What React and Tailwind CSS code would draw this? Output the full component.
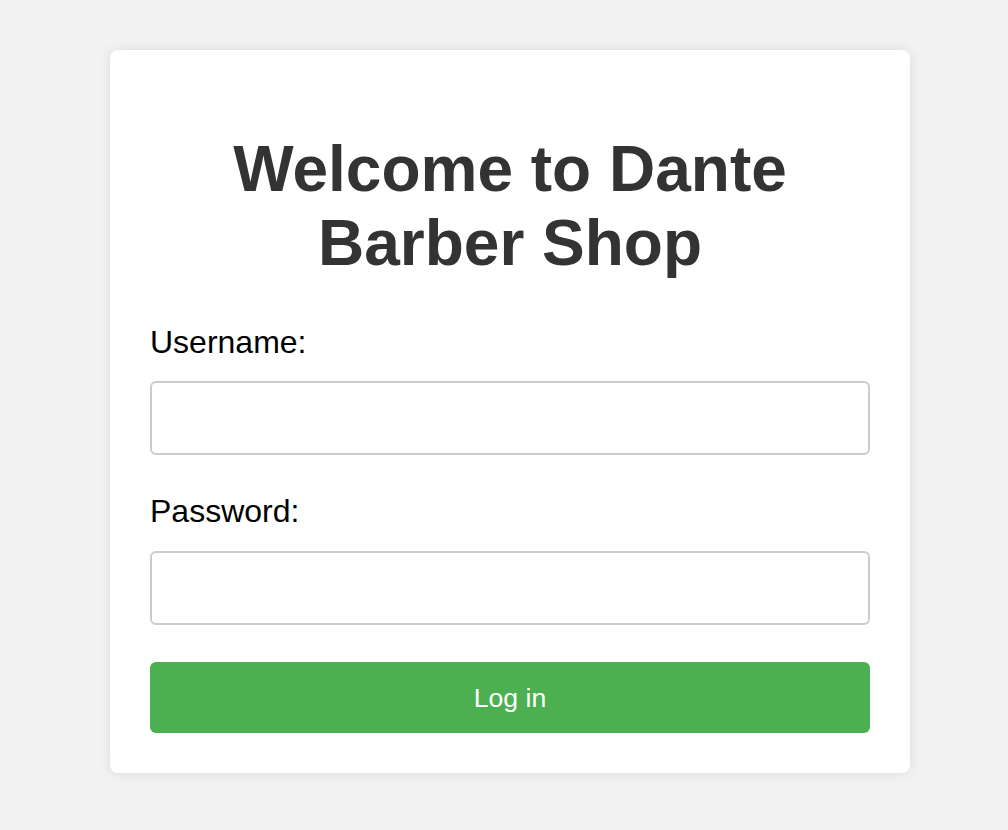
export default function App() {
  return (
    <div
      className="min-h-screen bg-[#f2f2f2] pt-[50px] pl-[110px]"
      style={{ fontFamily: '"Liberation Sans", Arial, sans-serif' }}
    >
      <div className="w-[800px] bg-white rounded-[8px] shadow-[0_0_12px_rgba(0,0,0,0.1)] p-[40px]">
        <h1 className="mt-[43px] mb-[44px] text-center text-[64px] font-bold leading-[73.5px] text-[#333]">
          Welcome to Dante Barber Shop
        </h1>
        <form onSubmit={(e) => e.preventDefault()}>
          <label htmlFor="username" className="block text-[32px] leading-[37px] text-black mb-[20px]">
            Username:
          </label>
          <input
            id="username"
            type="text"
            className="block w-full h-[74px] border-2 border-[#cccccc] rounded-[6px] px-[20px] text-[32px] mb-[38px] outline-none"
          />
          <label htmlFor="password" className="block text-[32px] leading-[37px] text-black mb-[21px]">
            Password:
          </label>
          <input
            id="password"
            type="password"
            className="block w-full h-[74px] border-2 border-[#cccccc] rounded-[6px] px-[20px] text-[32px] mb-[37px] outline-none"
          />
          <button
            type="submit"
            className="block w-full h-[71px] bg-[#4caf50] text-white text-[26.67px] rounded-[6px]"
          >
            Log in
          </button>
        </form>
      </div>
    </div>
  );
}
